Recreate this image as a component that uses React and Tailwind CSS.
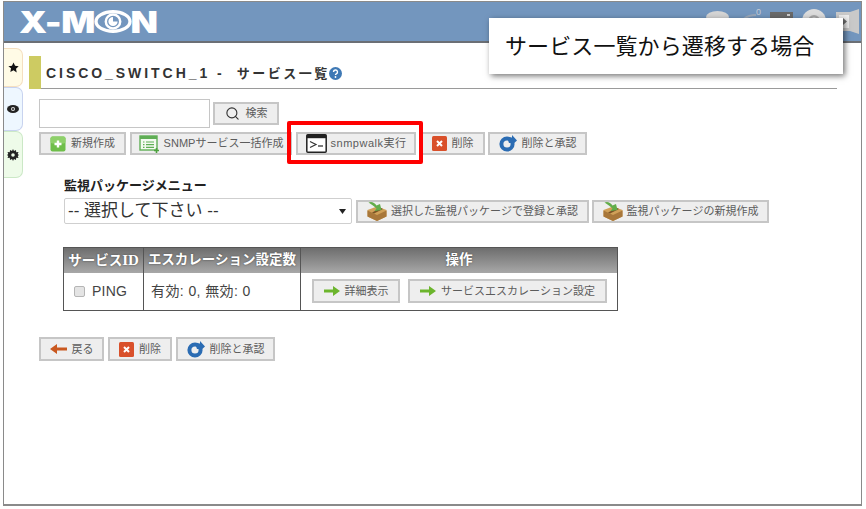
import { Search } from "lucide-react";

// Small toolbar icons
function PlusIcon() {
  return (
    <svg width="16" height="16" viewBox="0 0 16 16">
      <rect x="0.5" y="0.5" width="15" height="15" rx="2" fill="#6fbe4a" />
      <rect x="0.5" y="0.5" width="15" height="7" rx="2" fill="#8ed06a" />
      <path d="M8 4.500v7M4.500 8h7" stroke="#fff" strokeWidth="2.400" />
    </svg>
  );
}

function ListIcon() {
  return (
    <svg width="21" height="18" viewBox="0 0 21 18">
      <rect x="1" y="1" width="17" height="14" fill="#f3faf0" stroke="#5fae55" strokeWidth="1.400" />
      <rect x="1" y="1" width="17" height="3" fill="#5fae55" />
      <path d="M4 7h1.500M7 7h8M4 9.700h1.500M7 9.700h8M4 12.400h1.500M7 12.400h8" stroke="#5fae55" strokeWidth="1.200" />
      <path d="M17.500 13v5M15 15.500h5" stroke="#4da23f" strokeWidth="1.600" />
    </svg>
  );
}

function TerminalIcon() {
  return (
    <svg width="21" height="19" viewBox="0 0 21 19">
      <rect x="0.800" y="0.800" width="19.400" height="17.400" rx="1" fill="#fff" stroke="#222" strokeWidth="1.500" />
      <rect x="0.800" y="0.800" width="19.400" height="3.400" fill="#222" />
      <path d="M4 7.500l6 3-6 3" fill="none" stroke="#333" strokeWidth="1.200" />
      <path d="M12 12h5" stroke="#333" strokeWidth="1.300" />
    </svg>
  );
}

function DeleteIcon() {
  return (
    <svg width="15" height="15" viewBox="0 0 15 15">
      <rect width="15" height="15" rx="1.500" fill="#d9502a" />
      <path d="M5 5l5 5M10 5l-5 5" stroke="#fff" strokeWidth="2" />
    </svg>
  );
}

function ReloadIcon() {
  return (
    <svg width="18" height="17" viewBox="0 0 18 17">
      <circle cx="8" cy="9" r="5.600" fill="none" stroke="#2b6cb3" strokeWidth="4" />
      <path d="M8 2.500h5V0l5 5.500-5 4.500V8H10z" fill="#2b6cb3" />
    </svg>
  );
}

function PackageIcon() {
  return (
    <svg width="20" height="20" viewBox="0 0 20 20">
      <path d="M0.500 9L10 5.500 19.500 9v6.500L10 20 .5 15.500z" fill="#d0a058" />
      <path d="M0.500 9.500L10 14l9.500-4.500v6L10 20 .5 15.500z" fill="#a8773a" />
      <path d="M5 11.500L14 7l2 1-9 4.500z" fill="#7a5426" />
      <path d="M1.500 1.500c3-1.500 6 0 8 3L13 3l1.500 6-7 1 2-2.500C7.500 5.500 4.500 3.500 1.500 1.500z" fill="#62ad4a" />
    </svg>
  );
}

function GreenArrow() {
  return (
    <svg width="16" height="10" viewBox="0 0 16 10">
      <path d="M0 3.500h9V0l7 5-7 5V6.500H0z" fill="#6cb52d" />
    </svg>
  );
}

function BackArrow() {
  return (
    <svg width="17" height="10" viewBox="0 0 17 10">
      <path d="M17 3.500H7V0L0 5l7 5V6.500h10z" fill="#c9581f" />
    </svg>
  );
}

// Toolbar button
function Btn({ icon, label, className }) {
  return (
    <button className={"flex items-center justify-center gap-[4px] h-[23px] flex-shrink-0 border-2 border-[#c6c6c6] bg-[#eeeeee] text-[11px] text-[#5c5c5c] whitespace-nowrap " + className}>
      {icon}
      <span>{label}</span>
    </button>
  );
}

function Logo() {
  return (
    <div className="flex items-center origin-left scale-x-[1.190] font-['Inter',sans-serif] font-black text-[30px] leading-none text-white tracking-[-0.5px]">
      <span>X-M</span>
      <svg width="32" height="23" viewBox="0 0 37 23" preserveAspectRatio="none" className="mx-[-1px]">
        <ellipse cx="18.500" cy="11.500" rx="16.500" ry="9.800" fill="none" stroke="#fff" strokeWidth="3.200" />
        <circle cx="18.500" cy="11.500" r="7" fill="none" stroke="#fff" strokeWidth="2.400" />
        <path d="M18.500 7a4.500 4.500 0 1 0 4.500 4.500h-4.500z" fill="#fff" />
      </svg>
      <span>N</span>
    </div>
  );
}

// Top right icons, mostly hidden by the callout
function HeaderIcons() {
  return (
    <div className="flex items-start gap-[9px] h-[26px]">
      <svg width="23" height="12" viewBox="0 0 23 12" className="mt-[2px]"><ellipse cx="11.500" cy="6" rx="11.500" ry="6" fill="#d5d5d5" /></svg>
      <div className="relative w-[23px] h-[14px] mt-[2px]">
        <svg width="19" height="18" viewBox="0 0 19 18" className="mt-[1px]">
          <path d="M1 17C1 9 8 3 18 3M6 16l9-10M9 17c0-3 3-6 8-7" fill="none" stroke="#9aa8ba" strokeWidth="1.800" />
        </svg>
        <span className="absolute right-0 top-[-3px] text-[9px] leading-none text-[#c5ccd6]">0</span>
      </div>
      <svg width="23" height="14" viewBox="0 0 23 14" className="mt-[3px]"><rect width="23" height="14" fill="#6a6a6a" /><rect x="17" y="2" width="3" height="2" fill="#cfcfcf" /></svg>
      <svg width="24" height="24" viewBox="0 0 24 24"><circle cx="12" cy="12" r="12" fill="#dcdcdc" /><circle cx="12" cy="12" r="6" fill="#a8a8a8" /><circle cx="12" cy="12" r="3.500" fill="#e8e8e8" /></svg>
      <svg width="23" height="25" viewBox="0 0 23 25" className="ml-[1px]"><path d="M0 3h14l9-3v25l-9-3H0z" fill="#c9c9c9" /><rect x="3" y="6" width="10" height="13" fill="#ededed" /><path d="M7 9l4 3.500-4 3.500z" fill="#707070" /></svg>
    </div>
  );
}

function Tab({ className, children }) {
  return (
    <div className={"w-[19px] flex items-center justify-center border border-l-0 rounded-r-[7px] " + className}>
      {children}
    </div>
  );
}

export default function App() {
  return (
    <div className="relative w-[866px] h-[509px] bg-white pt-[1px] pl-[3px] pr-[4px] pb-[3px] font-['Liberation_Sans','Noto_Sans_CJK_JP',sans-serif] overflow-hidden">
      <div className="h-full flex flex-col border border-[#8a8a8a] border-b-2">
        {/* Header */}
        <div className="h-[41px] flex-shrink-0 flex items-center justify-between pl-[15px] pr-[2px] bg-[#7396be] border-b-2 border-[#6b6f75]">
          <Logo />
          <HeaderIcons />
        </div>

        <div className="flex flex-1">
          {/* Side tabs */}
          <div className="flex flex-col pt-[5px] w-[25px] flex-shrink-0">
            <Tab className="h-[39px] bg-[#fffbe6] border-[#f5dfc0]">
              <svg width="11" height="11" viewBox="0 0 24 24"><path d="M12 1l3.400 7.300 7.900 1-5.800 5.500 1.500 7.900L12 18l-6.900 3.700 1.500-7.900L.8 9.300l7.900-1z" fill="#111" /></svg>
            </Tab>
            <Tab className="h-[44px] bg-[#eef7ff] border-[#c8d3ef]">
              <svg width="12" height="8" viewBox="0 0 12 8"><ellipse cx="6" cy="4" rx="6" ry="4" fill="#222" /><circle cx="6" cy="4" r="2" fill="#ddd" /><circle cx="6" cy="4" r="1" fill="#222" /></svg>
            </Tab>
            <Tab className="h-[47px] bg-[#eefbe9] border-[#cbe8c6]">
              <svg width="12" height="12" viewBox="0 0 12 12">
                <path d="M6 0l1 2 2-1 .2 2.200L11.500 3l-.8 2.100L12 6l-1.300.9.800 2.100-2.300-.2L9 11l-2-1-1 2-1-2-2 1-.2-2.200L.5 9l.8-2.100L0 6l1.300-.9L.5 3l2.300.2L3 1l2 1z" fill="#222" />
                <circle cx="6" cy="6" r="1.800" fill="#eefbe9" />
              </svg>
            </Tab>
          </div>

          {/* Content */}
          <div className="w-[808px] pt-[13px]">
            <div className="flex h-[33px] items-stretch">
              <div className="w-[12px] bg-[#cdcb62]" />
              <h1 className="flex-1 flex items-center pl-[5px] pt-[3px] border-b border-[#9a9a9a] font-bold text-[#333333]">
                <span className="text-[14px] tracking-[2.950px]">CISCO_SWITCH_1 -</span>
                <span className="ml-[12px] text-[13px] tracking-[2.500px]">サービス一覧</span>
                <svg width="13" height="13" viewBox="0 0 13 13" className="ml-[-1px]">
                  <circle cx="6.500" cy="6.500" r="6.500" fill="#3f79b5" />
                  <path d="M4.500 5a2 2 0 1 1 2.800 1.800c-.6.300-.8.600-.8 1.200" fill="none" stroke="#fff" strokeWidth="1.400" />
                  <circle cx="6.500" cy="10" r="0.900" fill="#fff" />
                </svg>
              </h1>
            </div>

            <div className="pl-[10px] pt-[10px]">
              <div className="flex items-center gap-[3px]">
                <div className="w-[171px] h-[29px] border border-[#c6c6c6] bg-white" />
                <Btn
                  className="w-[66px] gap-[6px]"
                  icon={<Search size={15} strokeWidth={1.800} className="text-[#333333]" />}
                  label="検索"
                />
              </div>

              <div className="flex gap-[4px] mt-[4px]">
                <Btn className="w-[87px] gap-[5px]" icon={<PlusIcon />} label="新規作成" />
                <Btn className="w-[162px]" icon={<ListIcon />} label="SNMPサービス一括作成" />
                <Btn className="w-[120px] gap-[3px] tracking-[0.500px]" icon={<TerminalIcon />} label="snmpwalk実行" />
                <Btn className="w-[65px] gap-[5px]" icon={<DeleteIcon />} label="削除" />
                <Btn className="w-[99px] ml-[-1px] gap-[5px]" icon={<ReloadIcon />} label="削除と承認" />
              </div>

              <div className="ml-[25px] mt-[23px]">
                <div className="h-[15px] leading-[15px] text-[13px] font-bold text-[#222222]">監視パッケージメニュー</div>

                <div className="flex items-center gap-[4px] mt-[5px]">
                  <div className="w-[288px] h-[26px] flex items-center justify-between pl-[3px] pr-[5px] border border-[#cfcfcf] rounded-[2px] text-[17px] text-[#333333]">
                    <span>-- 選択して下さい --</span>
                    <svg width="7" height="5" viewBox="0 0 7 5"><path d="M0 0h7L3.500 5z" fill="#222" /></svg>
                  </div>
                  <Btn className="w-[233px] gap-[2px]" icon={<PackageIcon />} label="選択した監視パッケージで登録と承認" />
                  <Btn className="w-[177px] ml-[-1px] gap-[3px]" icon={<PackageIcon />} label="監視パッケージの新規作成" />
                </div>

                {/* Service table */}
                <table className="mt-[23px] ml-[-1px] w-[555px] table-fixed border-collapse border border-[#555555] text-[14px] text-[#444444]">
                  <thead>
                    <tr className="h-[25px] bg-gradient-to-b from-[#6e6e6e] to-[#a8a8a8] text-[13.500px] text-white [text-shadow:0_0_2px_#444444]">
                      <th className="w-[80px] border-r border-[#555555] font-bold whitespace-nowrap">サービス<span className="font-['Liberation_Serif',serif] text-[15px]">ID</span></th>
                      <th className="w-[157px] border-r border-[#555555] font-bold whitespace-nowrap">エスカレーション設定数</th>
                      <th className="font-bold">操作</th>
                    </tr>
                  </thead>
                  <tbody>
                    <tr className="h-[38px]">
                      <td className="border-r border-[#555555]">
                        <div className="flex items-center gap-[7px] pl-[10px]">
                          <span className="w-[11px] h-[11px] rounded-[2px] bg-[#e4e4e4] border border-[#b5b5b5]" />
                          <span className="tracking-[0.200px]">PING</span>
                        </div>
                      </td>
                      <td className="border-r border-[#555555] pl-[7px] whitespace-nowrap tracking-[0.400px]">有効: 0, 無効: 0</td>
                      <td>
                        <div className="flex gap-[8px] pl-[11px]">
                          <Btn className="w-[88px] h-[24px] gap-[5px]" icon={<GreenArrow />} label="詳細表示" />
                          <Btn className="w-[199px] h-[24px] gap-[5px]" icon={<GreenArrow />} label="サービスエスカレーション設定" />
                        </div>
                      </td>
                    </tr>
                  </tbody>
                </table>
              </div>

              <div className="flex gap-[4px] mt-[26px]">
                <Btn className="w-[65px] h-[24px] gap-[5px]" icon={<BackArrow />} label="戻る" />
                <Btn className="w-[64px] h-[24px] gap-[5px]" icon={<DeleteIcon />} label="削除" />
                <Btn className="w-[99px] h-[24px] gap-[5px]" icon={<ReloadIcon />} label="削除と承認" />
              </div>
            </div>
          </div>
        </div>
      </div>

      {/* Annotation overlays */}
      <div className="absolute left-[489px] top-[18px] w-[354px] h-[56px] flex items-center pl-[16px] bg-white shadow-[2px_2px_6px_rgba(0,0,0,0.55)] text-[22px] tracking-[0.100px] text-[#111111]">
        サービス一覧から遷移する場合
      </div>
      <div className="absolute left-[287px] top-[121px] w-[136px] h-[43px] border-[4px] border-[#ff0000] rounded-[2px]" />
    </div>
  );
}
